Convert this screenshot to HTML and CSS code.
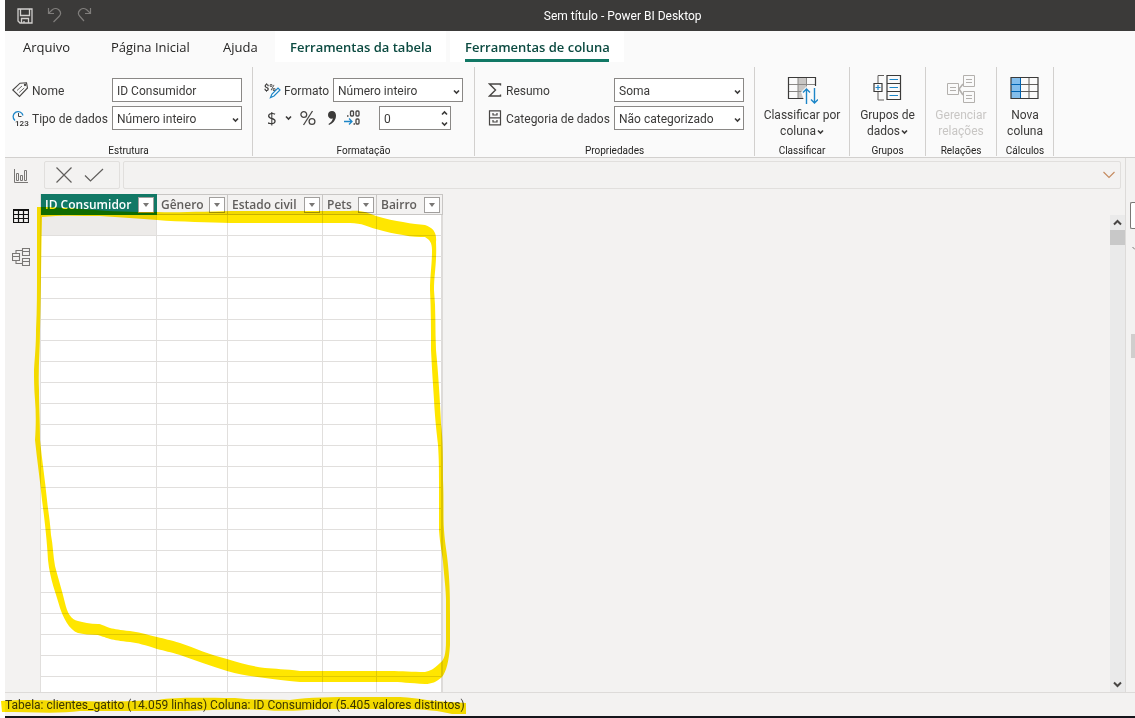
FILE: index.html
```html
<!DOCTYPE html>
<html lang="pt-BR">
<head>
<meta charset="utf-8">
<meta name="viewport" content="width=device-width, initial-scale=1">
<title>Sem título - Power BI Desktop</title>
<link rel="stylesheet" href="styles.css">
</head>
<body>
<svg class="defs" width="0" height="0" aria-hidden="true">
  <symbol id="chev" viewBox="0 0 7 6"><path d="M1 1.500 3.500 4 6 1.500" fill="none" stroke="currentColor" stroke-width="1.600"/></symbol>
</svg>
<div class="app">
  <header class="titlebar">
    <div class="quick">
      <button class="plain save" aria-label="Salvar"><svg width="16" height="16" viewBox="0 0 16 16" fill="none" stroke="#d2d0ce" stroke-width="1.300"><path d="M1 1h14v14H3l-2-2zM3.500 1v6.500h9V1M4.500 15v-4.500h7V15M7 15v-2"/></svg></button>
      <button class="plain" aria-label="Desfazer"><svg width="16" height="16" viewBox="0 0 16 16" fill="none" stroke="#7f7d7b" stroke-width="1.200"><path d="M1.500 0v5.500H7M1.800 5.200 5 2c2-1.800 5-2 7 0s2 4.500 0 6.500L6.500 14"/></svg></button>
      <button class="plain" aria-label="Refazer"><svg width="16" height="16" viewBox="0 0 16 16" fill="none" stroke="#7f7d7b" stroke-width="1.200"><path d="M13.500 0v5.500H8M13.200 5.200 10 2C8 .2 5 0 3 2s-2 4.500 0 6.500L7 13"/></svg></button>
    </div>
    <h1 class="title">Sem título - Power BI Desktop</h1>
  </header>

  <nav class="tabs">
    <a class="tab tab-file" href="#">Arquivo</a>
    <a class="tab tab-home" href="#">Página Inicial</a>
    <a class="tab tab-help" href="#">Ajuda</a>
    <a class="tab tab-tool" href="#">Ferramentas da tabela</a>
    <a class="tab tab-tool current" href="#"><span>Ferramentas de coluna</span></a>
  </nav>

  <section class="ribbon">
    <div class="group g-structure">
      <div class="fields">
        <svg class="ico" width="17" height="16" viewBox="0 0 17 16" fill="none" stroke="#484644" stroke-width="1.100"><path d="M.8 8 8 1.200 14.500.8 15.500 6 7.500 14.500z"/><path d="M5 8.500l5-4.500M7.200 10.500l5-4.500" stroke-width=".8"/><circle cx="13" cy="3" r=".6"/></svg>
        <label for="name">Nome</label>
        <input id="name" class="box" type="text" value="ID Consumidor">
        <svg class="ico" width="17" height="17" viewBox="0 0 17 17"><path d="M3 10.500A5 5 0 1 1 11 5.500" fill="none" stroke="#1d86c8" stroke-width="1.300"/><path d="M6.500 3v3.500h3" fill="none" stroke="#484644"/><text x="3" y="16" class="tiny">123</text></svg>
        <label for="type">Tipo de dados</label>
        <span class="pick"><select id="type" class="box"><option>Número inteiro</option></select><svg><use href="#chev"/></svg></span>
      </div>
      <h2>Estrutura</h2>
    </div>

    <div class="group g-format">
      <div class="line">
        <svg class="ico" width="18" height="18" viewBox="0 0 18 18"><text x="0" y="10" class="tiny heavy">$%</text><path d="M6.500 16.500 8 13l6-6 2 2-6 6z" fill="#fff" stroke="#1d86c8" stroke-width="1.200"/></svg>
        <label for="format">Formato</label>
        <span class="pick"><select id="format" class="box"><option>Número inteiro</option></select><svg><use href="#chev"/></svg></span>
      </div>
      <div class="line symbols">
        <button class="plain sym dollar" aria-label="Moeda">$<svg class="mini"><use href="#chev"/></svg></button>
        <button class="plain sym" aria-label="Porcentagem"><svg width="16" height="16" viewBox="0 0 16 16" fill="none" stroke="#484644" stroke-width="1.300"><circle cx="3.800" cy="4.500" r="2.900"/><circle cx="12" cy="11.500" r="2.900"/><path d="M12.500 1 3.500 15"/></svg></button>
        <button class="plain sym comma" aria-label="Separador de milhar"><svg width="8" height="14" viewBox="0 0 8 14" fill="#3b3a39"><path d="M4 0c2.500 0 4 1.800 4 4.500C8 9 5 12.500 1 14l-.5-1C3 11.500 4.500 9.500 4.800 7.500 2 8.200 0 6.500 0 4s1.600-4 4-4z"/></svg></button>
        <button class="plain sym" aria-label="Casas decimais"><svg width="16" height="16" viewBox="0 0 16 16" fill="none" stroke="#484644" stroke-width="1.300"><rect x="6.500" y="1" width="3" height="5" rx="1"/><rect x="12" y="1" width="3" height="5" rx="1"/><rect x="12" y="9" width="3" height="5" rx="1"/><path d="M3 6h1.500M9.500 14H11"/><path d="M0 11.500h8M5 8.500l3 3-3 3" stroke="#1d86c8"/></svg></button>
        <span class="spin"><input class="box" type="text" value="0" aria-label="Casas decimais"><svg class="up"><use href="#chev"/></svg><svg class="down"><use href="#chev"/></svg></span>
      </div>
      <h2>Formatação</h2>
    </div>

    <div class="group g-props">
      <div class="fields">
        <svg class="ico" width="14" height="14" viewBox="0 0 14 14" fill="none" stroke="#484644" stroke-width="1.400"><path d="M12.500 2.500V1H1.500l6 6-6 6h11v-1.500"/></svg>
        <label for="sum">Resumo</label>
        <span class="pick"><select id="sum" class="box"><option>Soma</option></select><svg><use href="#chev"/></svg></span>
        <svg class="ico" width="14" height="16" viewBox="0 0 14 16" fill="none" stroke="#484644" stroke-width="1.200"><path d="M1.500.8h11v14h-11zM1.500 7.800h11M5 3v2h4V3M5 10v2h4v-2"/></svg>
        <label for="cat">Categoria de dados</label>
        <span class="pick"><select id="cat" class="box"><option>Não categorizado</option></select><svg><use href="#chev"/></svg></span>
      </div>
      <h2>Propriedades</h2>
    </div>

    <div class="group g-sort">
      <button class="plain big">
        <svg width="32" height="30" viewBox="0 0 32 30" fill="none"><path d="M12 3h9v20h-9z" fill="#c8c6c4"/><path d="M3 9.500h26M3 16.500h14M12 2v21M20.500 2v9" stroke="#8a8886"/><path d="M18 23.500H2.500v-21h27V11" stroke="#3b3a39" stroke-width="1.200"/><path d="M15 17l5-5 4 4v12h-5z" fill="#fafafa"/><path d="M20.500 29V14M17 17.500l3.500-3.500 3.500 3.500M28.500 13v15M25 24.500l3.500 3.500 3.500-3.500" stroke="#1d86c8" stroke-width="1.400"/></svg>
        <span>Classificar por<br>coluna<svg class="mini"><use href="#chev"/></svg></span>
      </button>
      <h2>Classificar</h2>
    </div>

    <div class="group g-groups">
      <button class="plain big">
        <svg width="32" height="30" viewBox="0 0 32 30" fill="none"><path d="M12 .5H6V8M6 17v8h6" stroke="#605e5c"/><path d="M2 8.500h8v8H2zM15 .5h13.500v24H15zM15 8.500h13.500M15 16.500h13.500" stroke="#3b3a39" stroke-width="1.200"/><path d="M3.500 12.500h5M6 10v5M17.500 4.500H26M17.500 12.500H26M17.500 20.500H26" stroke="#1d86c8" stroke-width="1.200"/></svg>
        <span>Grupos de<br>dados<svg class="mini"><use href="#chev"/></svg></span>
      </button>
      <h2>Grupos</h2>
    </div>

    <div class="group g-rel">
      <button class="plain big" disabled>
        <svg width="32" height="30" viewBox="0 0 32 30" fill="none" stroke="#b3b0ad"><path d="M2.500 8.500h11v11h-11zM18.500.5h11v11h-11zM18.500 16.500h11v11h-11zM5 12.500h6M5 15.500h6M21 4.500h6M21 7.500h6M21 20.500h6M21 23.500h6"/><path d="M18 9l-4 5 4 6" stroke-width="1.600"/></svg>
        <span>Gerenciar<br>relações</span>
      </button>
      <h2>Relações</h2>
    </div>

    <div class="group g-calc">
      <button class="plain big">
        <svg width="32" height="30" viewBox="0 0 32 30" fill="none"><path d="M2 3h9v20H2z" fill="#83beec"/><path d="M11 9.500h18M11 16.500h18M20 2v21" stroke="#605e5c"/><path d="M2 2.500h27v21H2z" stroke="#3b3a39" stroke-width="1.200"/><path d="M2 9.500h9M2 16.500h9M11.500 3v20" stroke="#0063b1"/></svg>
        <span>Nova<br>coluna</span>
      </button>
      <h2>Cálculos</h2>
    </div>
  </section>

  <main class="main">
    <nav class="views">
      <a href="#" aria-label="Relatório"><svg width="16" height="16" viewBox="0 0 16 16" fill="none" stroke="#797775"><path d="M1.500 1v13.500H15M3.500 5.500h2v7h-2zM7.500 7.500h2v5h-2zM11.500 2.500h2v10h-2z"/></svg></a>
      <a href="#" aria-label="Dados" class="on"><svg width="16" height="16" viewBox="0 0 16 16" fill="none" stroke="#111" stroke-width="1.200"><path d="M.5 1.500h15v13H.5zM.5 2.500h15M.5 6.500h15M.5 10.500h15M5.500 2v12M10.500 2v12"/></svg></a>
      <a href="#" aria-label="Modelo"><svg width="18" height="18" viewBox="0 0 18 18" fill="none" stroke="#797775" stroke-width="1.100"><path d="M.5 5.500h7v7h-7zM.5 8.500h7M10.500.5h7v7h-7zM10.500 3.500h7M10.500 10.500h7v7h-7zM10.500 13.500h7M4 5.500v-3h6.500M4 12.500v3h6.500"/></svg></a>
    </nav>

    <section class="work">
      <div class="formula">
        <div class="actions">
          <button class="plain" aria-label="Cancelar"><svg width="16" height="16" viewBox="0 0 16 16" fill="none" stroke="#605e5c" stroke-width="1.200"><path d="M.5.5l15 15M15.500.5l-15 15"/></svg></button>
          <button class="plain" aria-label="Confirmar"><svg width="20" height="16" viewBox="0 0 20 16" fill="none" stroke="#605e5c" stroke-width="1.200"><path d="M1 8.500 6.500 14 19 2"/></svg></button>
        </div>
        <div class="expr">
          <input type="text" aria-label="Fórmula">
          <button class="plain" aria-label="Expandir"><svg width="12" height="8" viewBox="0 0 12 8" fill="none" stroke="#c58a5e" stroke-width="1.100"><path d="M.5 1 6 6.500 11.500 1"/></svg></button>
        </div>
      </div>
      <div class="data">
        <div class="sheet">
          <table class="grid">
            <colgroup><col class="c1"><col class="c2"><col class="c3"><col class="c4"><col class="c5"></colgroup>
            <thead><tr>
              <th class="sel"><div>ID Consumidor<button class="drop" aria-label="Filtrar ID Consumidor"></button></div></th>
              <th><div>Gênero<button class="drop" aria-label="Filtrar Gênero"></button></div></th>
              <th><div>Estado civil<button class="drop" aria-label="Filtrar Estado civil"></button></div></th>
              <th><div>Pets<button class="drop" aria-label="Filtrar Pets"></button></div></th>
              <th><div>Bairro<button class="drop" aria-label="Filtrar Bairro"></button></div></th>
            </tr></thead>
            <tbody id="rows"></tbody>
          </table>
        </div>
        <div class="scroll">
          <svg width="9" height="7" viewBox="0 0 9 7" fill="none" stroke="#484644" stroke-width="2"><path d="M1 5.500 4.500 2 8 5.500"/></svg>
          <div class="thumb"></div>
          <svg class="end" width="9" height="7" viewBox="0 0 9 7" fill="none" stroke="#484644" stroke-width="2"><path d="M1 1.500 4.500 5 8 1.500"/></svg>
        </div>
      </div>
    </section>

    <aside class="pane">
      <div class="pane-box"></div>
      <svg width="4" height="6" viewBox="0 0 4 6" fill="none" stroke="#797775"><path d="M1.500 1 4 3.500"/></svg>
      <div class="pane-bar"></div>
    </aside>
  </main>

  <footer class="status">Tabela: clientes_gatito (14.059 linhas) Coluna: ID Consumidor (5.405 valores distintos)</footer>
</div>

<svg class="marker" width="1135" height="718" viewBox="0 0 1135 718" fill="#ffe600" aria-hidden="true">
  <path fill-rule="evenodd" d="M38 207C60 207 75 209 95 210C120 212 140 212 157 212C180 213 210 211 240 211H350C362 210 368 213 376 216C386 219 395 221 403 222C412 224 419 224 425 225C433 228 437 232 436 242C437 262 434 275 434 290C436 310 435 330 436 350C438 370 440 400 441 423C443 440 443 460 443 480C444 500 443 515 444 530C445 545 447 552 448 565C450 585 450 600 450 615V645C449 662 446 672 442 677C436 682 432 684 425 684C410 683 400 682 390 682H300C285 681 275 679 265 678C250 676 240 675 227 671C210 666 195 660 180 655C170 652 165 651 157 649C145 645 138 643 130 642C120 641 115 640 110 639C104 637 101 636 98 635C90 635 83 634 78 633C69 630 63 617 60 608C56 593 50 580 48 560C47 540 44 515 42 500C40 480 37 460 35 440C36 425 36 412 35 400C34 388 34 378 34 370C35 355 36 345 36 330C37 310 37 290 37 270V207ZM42 217C60 215 80 216 100 216C120 217 140 219 157 220C180 222 210 222 230 223H350C362 223 368 227 376 229C386 232 395 234 403 235C412 237 419 237 425 237C430 240 432 243 432 250C432 265 430 275 430 290C431 310 431 330 431 350C432 370 433 385 434 400C435 420 437 435 438 445C439 460 439 470 439 480V530C440 545 442 552 443 562C444 575 446 590 446 600V640C446 655 444 660 440 663C434 669 430 671 425 672C412 672 402 671 390 671H300C285 669 275 669 265 668C250 666 240 663 227 659C210 655 195 648 180 643C170 640 165 639 157 637C145 634 138 632 130 631C120 630 115 629 110 628C104 626 101 624 98 624C90 624 83 622 78 621C71 620 67 612 65 603C62 590 58 578 55 566C53 555 53 545 51 535C50 520 48 510 47 500C45 480 42 460 40 440C40 420 39 405 39 390C38 370 40 350 40 330C41 300 41 260 42 217Z"/>
  <path d="M1 701C30 699 45 701 75 701C110 702 135 701 158 700C175 697 200 698 235 698C255 700 275 700 290 700C310 697 330 697 360 697H400C420 698 435 702 450 702L466 703V714H452C440 711 425 709 400 709H320C305 710 285 712 265 710C240 709 210 710 185 711H80C60 714 30 712 2 712Z"/>
</svg>
<script src="app.js"></script>
</body>
</html>
```
FILE: styles.css
```css
* { box-sizing: border-box; }

body {
  margin: 0;
  background: #fff;
  color: #3b3a39;
  font-family: Roboto, "Open Sans", sans-serif;
  font-size: 12px;
  line-height: 16px;
}

.defs { display: none; }
h1, h2 { margin: 0; font-weight: 400; }
a { color: inherit; text-decoration: none; }
svg { display: block; flex: none; }

button, input, select { font: inherit; color: inherit; }
.plain { border: 0; padding: 0; background: none; }

.app {
  display: flex;
  flex-direction: column;
  height: 100vh;
  margin-left: 5px;
  border-bottom: 2px solid #15151b;
  background: #f3f2f1;
}

/* Title bar */
.titlebar {
  display: grid;
  grid-template-columns: 5fr auto 4fr;
  align-items: center;
  height: 31px;
  padding: 0 12px;
  background: #3b3a39;
  color: #fff;
}
.quick { display: flex; gap: 14px; }
.title { font-size: 12px; line-height: 16px; }

/* Tabs */
.tabs { display: flex; height: 31px; background: #fafafa; color: #252423; font-family: "Open Sans", "Noto Sans", sans-serif; font-size: 13px; }
.tab { padding: 8px 0 0; }
.tab-file { width: 88px; margin-left: 18px; }
.tab-home { width: 112px; }
.tab-help { width: 52px; }
.tab-tool { width: 171px; padding: 8px 15px 0; background: #fff; color: #0b4a40; font-weight: 600; white-space: nowrap; }
.current { width: 174px; margin-left: 4px; }
.current span { display: block; height: 23px; border-bottom: 3px solid #117865; }

/* Ribbon */
.ribbon {
  display: flex;
  flex: none;
  height: 96px;
  padding: 5px 0 1px;
  background: #fafafa;
  border-bottom: 1px solid #d2d0ce;
}
.group {
  display: flex;
  flex-direction: column;
  padding-top: 11px;
  border-right: 1px solid #d2d0ce;
}
.group h2 { margin-top: auto; font-size: 10px; line-height: 10px; text-align: center; color: #252423; }
.g-structure { width: 248px; }
.g-format { width: 222px; gap: 4px; }
.g-props { width: 280px; }
.g-sort { width: 95px; }
.g-groups { width: 76px; }
.g-rel { width: 71px; }
.g-calc { width: 57px; }

.fields { display: grid; grid-template-columns: 20px 1fr 130px; row-gap: 4px; align-items: center; padding: 0 10px 0 7px; }
.g-props .fields { grid-template-columns: 18px 1fr 130px; padding-left: 13px; }
.fields label, .line label { padding-top: 1px; white-space: nowrap; }

.box {
  display: block;
  width: 100%;
  height: 24px;
  padding: 1px 4px 0;
  border: 1px solid #8a8886;
  border-radius: 0;
  background: #fff;
  appearance: none;
}
.pick, .spin { position: relative; display: block; }
.pick svg, .spin svg { position: absolute; right: 3px; top: 11px; width: 7px; height: 6px; pointer-events: none; }
.spin .up { top: 4px; transform: rotate(180deg); }
.spin .down { top: 15px; }

.line { display: flex; align-items: center; height: 24px; padding: 0 11px; }
.line .ico { margin-right: 2px; }
.line .pick { width: 130px; margin-left: auto; }
.symbols { gap: 8px; padding-left: 14px; }
.sym { display: flex; align-items: center; gap: 7px; }
.dollar { font-family: "Open Sans", sans-serif; font-size: 17px; line-height: 24px; }
.comma { padding: 0 4px; }
.symbols .comma + .sym { margin-left: -4px; }
.spin { width: 72px; margin-left: auto; margin-right: 12px; }
.mini { display: inline-block; width: 7px; height: 6px; margin-left: 1px; }
.tiny { font-size: 8px; font-weight: 600; fill: #3b3a39; }
.heavy { font-size: 9px; font-weight: 700; }

.big { display: flex; flex-direction: column; align-items: center; gap: 2px; margin-top: -3px; white-space: nowrap; }
.big:disabled { color: #c8c6c4; }

/* Work area */
.main { display: flex; flex: 1; min-height: 0; }
.views { display: flex; flex-direction: column; align-items: center; gap: 24px; flex: none; width: 32px; padding-top: 10px; }

.work { display: flex; flex-direction: column; flex: 1; min-width: 0; margin-left: 3px; }
.formula { display: flex; gap: 3px; height: 36px; padding: 3px 4px 5px; flex: none; }
.actions, .expr { display: flex; align-items: center; border: 1px solid #e1dfdd; border-radius: 2px; }
.actions { gap: 12px; width: 76px; padding-left: 11px; }
.expr { flex: 1; padding-right: 5px; }
.expr input { flex: 1; min-width: 0; border: 0; background: none; }

.data { display: flex; justify-content: space-between; flex: 1; min-height: 0; }
.sheet { overflow: hidden; border-left: 1px solid #e1dfdd; }
.grid { width: 402px; table-layout: fixed; border-collapse: separate; border-spacing: 0; }
.c1 { width: 116px; }
.c2 { width: 71px; }
.c3 { width: 95px; }
.c4 { width: 54px; }
.c5 { width: 66px; }
.grid th { height: 21px; padding: 0; border: solid #c8c6c4; border-width: 1px 1px 1px 0; color: #605e5c; font-family: "Open Sans", "Noto Sans", sans-serif; font-weight: 600; }
.grid th div { display: flex; align-items: center; justify-content: space-between; height: 19px; padding: 0 2px 0 4px; white-space: nowrap; }
.grid .sel { background: #117865; color: #fff; border-color: #117865; }
.grid td { height: 21px; padding: 0; background: #fff; border: solid #e1dfdd; border-width: 0 1px 1px 0; }
.grid td:last-child { border-right: 2px solid #dddbd9; }
.grid td.active { background: #edebe9; }
.drop { display: grid; place-items: center; width: 16px; height: 16px; padding: 0; border: 1px solid #a19f9d; background: #fff; }
.drop::before { content: ""; border: 3px solid transparent; border-top: 4px solid #797775; border-bottom: 0; }

.scroll { display: flex; flex-direction: column; align-items: center; width: 15px; margin-top: 21px; padding: 4px 0; background: #eaeaea; }
.thumb { width: 15px; height: 15px; margin-top: 4px; background: #c8c8c8; }
.scroll .end { margin-top: auto; }

.pane { display: flex; flex-direction: column; align-items: flex-end; flex: none; width: 10px; overflow: hidden; border-left: 1px solid #dddbd9; }
.pane-box { width: 5px; height: 27px; margin: 44px 0 17px; border: 1px solid #797775; border-right: 0; border-radius: 2px 0 0 2px; background: #fff; }
.pane-bar { width: 4px; height: 24px; margin-top: 82px; background: #d0cecd; }

.status { flex: none; height: 24px; padding-top: 4px; border-top: 1px solid #dddbd9; white-space: nowrap; }

/* Highlighter strokes over the page */
.marker { position: absolute; left: 0; top: 0; mix-blend-mode: multiply; pointer-events: none; }
```
FILE: app.js
```js
const body = document.getElementById("rows");
for (let r = 0; r < 23; r++) {
  const row = body.insertRow();
  for (let c = 0; c < 5; c++) {
    const cell = row.insertCell();
    if (r === 0 && c === 0) cell.className = "active";
  }
}
```
